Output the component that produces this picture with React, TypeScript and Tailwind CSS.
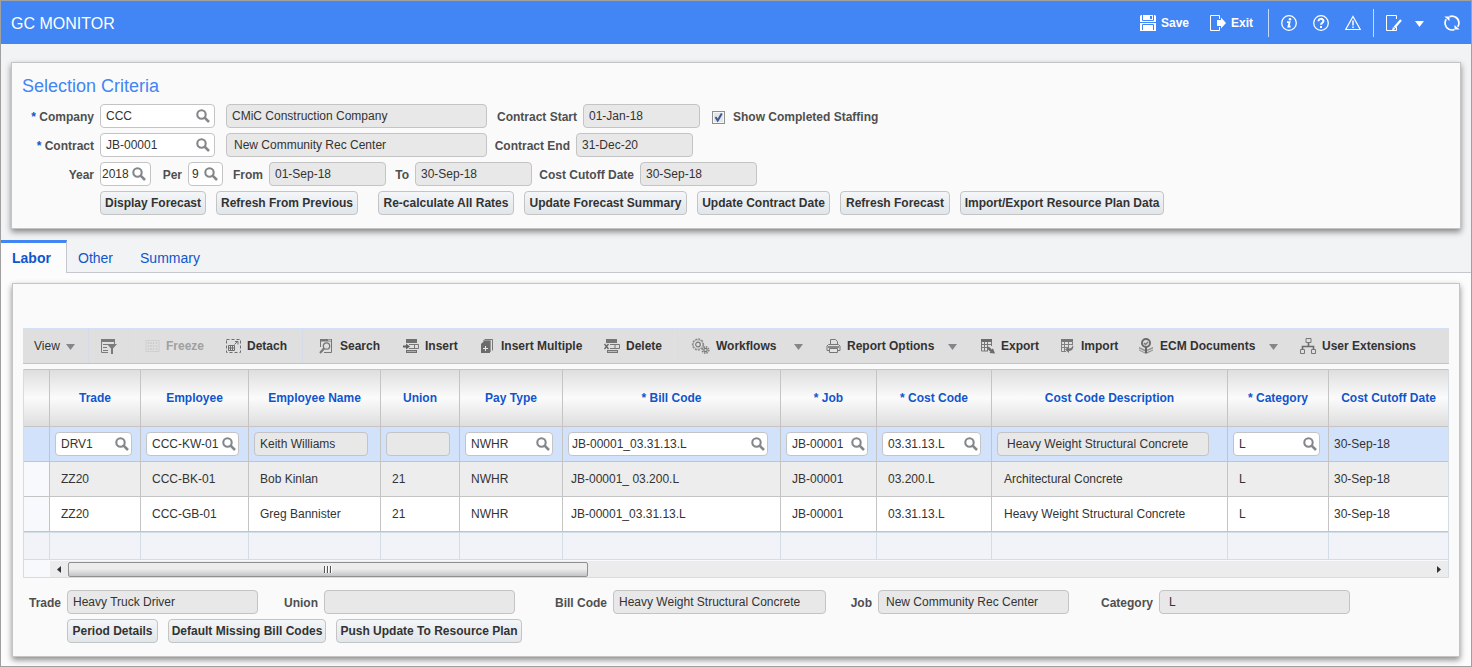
import React from 'react';
import { clsx } from 'clsx';

type IconProps = { className?: string };

/* ---------- Icons ---------- */

function Svg({ w = 16, h = 16, className, children }: { w?: number; h?: number; className?: string; children: React.ReactNode }) {
  return (
    <svg width={w} height={h} viewBox={`0 0 ${w} ${h}`} fill="none" className={clsx('shrink-0', className)} aria-hidden="true">
      {children}
    </svg>
  );
}

const SearchGlyph = () => (
  <Svg w={14} h={14}>
    <circle cx="5.5" cy="5.5" r="4.2" stroke="#84878a" strokeWidth="2.1" />
    <path d="M8.6 8.6l4.4 4.4" stroke="#84878a" strokeWidth="2.6" />
  </Svg>
);

const SaveIcon = () => (
  <Svg>
    <path d="M1 0h14l1 1v15H0V1z" fill="#fff" />
    <path d="M2.5 0v5.5h11V0M0 7.500h16M2.500 15V9.500h11V15" stroke="#4285f4" />
    <path d="M10 1h2v3h-2z" fill="#4285f4" />
  </Svg>
);

const ExitIcon = () => (
  <Svg>
    <path d="M9.500 4V.5h-9v15h9V12" stroke="#fff" />
    <path d="M7 5h4V2.500L16 8l-5 5.500V11H7z" fill="#fff" />
  </Svg>
);

const InfoIcon = () => (
  <Svg>
    <circle cx="8" cy="8" r="7.3" stroke="#fff" strokeWidth="1.3" />
    <circle cx="9" cy="4.2" r="1.3" fill="#fff" />
    <path d="M6 7.200h2.600L7.400 11.500h2.200" stroke="#fff" strokeWidth="1.800" />
  </Svg>
);

const HelpIcon = () => (
  <Svg>
    <circle cx="8" cy="8" r="7.3" stroke="#fff" strokeWidth="1.3" />
    <path d="M5.500 6.300c0-3.200 5-3.200 5-.2 0 1.800-2.500 1.700-2.500 3.600" stroke="#fff" strokeWidth="2" />
    <path d="M7 11h2v2H7z" fill="#fff" />
  </Svg>
);

const WarningIcon = () => (
  <Svg>
    <path d="M8 1.500L15.300 14.500H.7z" stroke="#fff" strokeWidth="1.200" />
    <path d="M8 5.500v5M8 11.500v1.500" stroke="#fff" strokeWidth="1.500" />
  </Svg>
);

const EditIcon = () => (
  <Svg>
    <path d="M10.500 4V.5H.5v15h10V12" stroke="#fff" />
    <path d="M15 5l-6.500 7.500" stroke="#fff" strokeWidth="2.200" />
    <path d="M6 15.500l1-3.500 2.500 2z" fill="#fff" />
  </Svg>
);

const RefreshIcon = () => (
  <Svg>
    <path d="M4.500 14A7 7 0 0 1 2.200 4.200M5.500 1.600A7 7 0 0 1 13.800 11.800M11.500 2A7 7 0 0 1 14.800 9M4.500 14a7 7 0 0 0 6 .500" stroke="#fff" strokeWidth="1.700" />
    <path d="M.300 1.500h5.200V6zM15.700 14.500h-5.200V10z" fill="#fff" />
  </Svg>
);

const CaretDown = ({ className }: IconProps) => (
  <Svg w={9} h={6} className={className}>
    <path d="M0 0h9L4.500 6z" fill="currentColor" />
  </Svg>
);

const FilterIcon = () => (
  <Svg w={17}>
    <path d="M1 1h14v3H1z" fill="#7b7b7b" />
    <path d="M1.500 3v11.500H8M3 6.500h5M3 9.500h4M3 12.500h5M14.500 4v2" stroke="#7b7b7b" />
    <path d="M7 6h10l-4 4.500V16h-2v-5.500z" fill="#7b7b7b" />
  </Svg>
);

const FreezeIcon = () => (
  <Svg>
    <path d="M2 2.500h13v11H2z" stroke="#cfcfcf" />
    <path d="M4.500 4v9M7 4v9M9.500 4v9M12.500 4v9" stroke="#cdcdcd" strokeWidth="1.500" strokeDasharray="2 1" />
  </Svg>
);

const DetachIcon = () => (
  <Svg>
    <path d="M1.500 1.500h14v13h-14z" stroke="#6f6f6f" strokeDasharray="3 2" />
    <path d="M3.500 7.500h6v5h-6zM3.500 10h6M5.500 7.500v5M7.500 7.500v5" stroke="#6f6f6f" />
    <path d="M9.500 6.500l3-3M10 3.500h3v3" stroke="#6f6f6f" />
  </Svg>
);

const SearchPageIcon = () => (
  <Svg>
    <path d="M2.500 9V1.500h11v13H6" stroke="#777" />
    <path d="M2 1h12v2.500H2z" fill="#777" />
    <path d="M10 2.200h3" stroke="#ddd" />
    <circle cx="8.500" cy="8" r="3.200" stroke="#777" strokeWidth="1.300" />
    <path d="M6 10.500L2 15" stroke="#777" strokeWidth="2" />
  </Svg>
);

const InsertIcon = () => (
  <Svg>
    <path d="M3 1h11v4H3zM3 12h11v3H3z" fill="#707070" />
    <path d="M4 13.500h9" stroke="#aaa" />
    <path d="M6 6.500h9.500v4H6M11.500 6v5" stroke="#777" />
    <path d="M0 7.500h3V5.500L7 8.500l-4 3v-2H0z" fill="#606060" />
  </Svg>
);

const InsertMultipleIcon = () => (
  <Svg>
    <path d="M5.500 1.500h8v11" stroke="#777" />
    <path d="M4 2.500h7.500v11.500" stroke="#999" />
    <path d="M5 3h6v12H2V6z" fill="#6b6b6b" />
    <path d="M6.500 8v5M4 10.500h5" stroke="#e8e8e8" />
  </Svg>
);

const DeleteIcon = () => (
  <Svg>
    <path d="M2 1h11v4H2zM3 12h11v3H3z" fill="#757575" />
    <path d="M4 13.500h9" stroke="#bbb" />
    <path d="M6 6.500h9.500v4H6M11 6v5" stroke="#777" />
    <path d="M.500 6l4 5M4.500 6l-4 5" stroke="#666" strokeWidth="1.300" />
  </Svg>
);

const GearsIcon = () => (
  <Svg w={20}>
    <circle cx="8" cy="6.500" r="5.500" stroke="#8c8c8c" strokeWidth="1.300" strokeDasharray="2 1.200" />
    <circle cx="8" cy="6.500" r="4.700" stroke="#969696" strokeWidth=".8" />
    <circle cx="8" cy="6.500" r="2.300" stroke="#777" strokeWidth="1.200" />
    <circle cx="15.500" cy="12" r="3.200" stroke="#808080" strokeWidth="1.600" strokeDasharray="1.500 1" />
    <circle cx="15.500" cy="12" r="1.700" stroke="#777" strokeWidth="1.200" />
  </Svg>
);

const PrintIcon = () => (
  <Svg>
    <path d="M5.500 6V1.500h5l2 2V6M3.500 6.500h10L15 8v4.500H2V8z" stroke="#777" />
    <path d="M3 8.500h11M3 9.500h11" stroke="#8a8a8a" />
    <path d="M4.500 10.500h8v4h-8z" fill="#e4e4e4" stroke="#777" />
  </Svg>
);

const ExportIcon = () => (
  <Svg>
    <path d="M2 1h11v3H2z" fill="#6b6b6b" />
    <path d="M2.500 3v10H9M12.500 3v5M5.500 4v9M8.500 4v9M2 6.500h11M2 9.500h8" stroke="#777" />
    <path d="M8 8l3 1.500 1.500 2 1.500-1 2 5-5.500-.500 1-1.500C9.500 12.500 8.500 11 8 8z" fill="#6b6b6b" />
  </Svg>
);

const ImportIcon = () => (
  <Svg>
    <path d="M2 1h12v3H2z" fill="#777" />
    <path d="M2.500 3v10.500H7M13.500 3v4M5.500 4v10M9.500 4v5M2 6.500h12M2 9.500h7" stroke="#808080" />
    <path d="M14 7c1 4-1 5.500-4 6v2l-4-3.500L10 8.500v2c2 0 3-1 4-3.500z" fill="#757575" />
  </Svg>
);

const EcmIcon = () => (
  <Svg>
    <path d="M1 9l7 3 7-3v3.500L8 16l-7-3.500z" fill="#909090" />
    <path d="M1 11l6.500 3.200L15 11" stroke="#ddd" />
    <circle cx="8" cy="5" r="4" fill="#ddd" stroke="#6c6c6c" strokeWidth="2" />
    <path d="M6 5l1.500 1.500L10 4" stroke="#777" strokeWidth="1.300" />
    <path d="M8 9v6" stroke="#666" strokeWidth="2" />
  </Svg>
);

const OrgIcon = () => (
  <Svg>
    <path d="M6 .5h5v4H6zM.5 11.500h4v4h-4zM11.500 11.500h4v4h-4z" stroke="#777" />
    <path d="M8.500 5v3.500M2.500 11V8.500h11V11" stroke="#6b6b6b" strokeWidth="1.600" />
  </Svg>
);

/* ---------- Controls ---------- */

const readOnlyBox = 'h-6 shrink-0 rounded-[4px] border border-[#c4c4c4] bg-[#e8e8e8] pb-px text-xs text-[#333]';

function ReadOnlyField({ id, label, value, className, pad = 'pl-[5px]' }: { id?: string; label?: string; value: string; className: string; pad?: string }) {
  return <input id={id} aria-label={label} readOnly value={value} className={clsx(readOnlyBox, pad, className)} />;
}

function LovField({ id, label, value, className, pad = 'pl-[5px] pr-1' }: { id?: string; label: string; value: string; className: string; pad?: string }) {
  return (
    <div className={clsx('flex h-6 shrink-0 items-center rounded-[4px] border border-[#c4c4c4] bg-white', pad, className)}>
      <input id={id} aria-label={id ? undefined : label} defaultValue={value} className="h-full w-0 min-w-0 flex-1 bg-transparent pb-px text-xs text-[#333] outline-none" />
      <button type="button" aria-label={`Search ${label}`}>
        <SearchGlyph />
      </button>
    </div>
  );
}

function Label({ htmlFor, required, className, children }: { htmlFor: string; required?: boolean; className: string; children: React.ReactNode }) {
  return (
    <label htmlFor={htmlFor} className={clsx('shrink-0 pt-[2px] pr-[6px] text-right text-xs font-bold whitespace-nowrap text-[#4f4f4f]', className)}>
      {required && <span className="text-[#1155cc]">* </span>}
      {children}
    </label>
  );
}

function Button({ className, children }: { className?: string; children: React.ReactNode }) {
  return (
    <button
      type="button"
      className={clsx(
        'h-6 shrink-0 rounded-[4px] border border-[#c4c4c4] bg-linear-to-b from-[#f4f6f8] to-[#e1e6ea] text-center text-xs font-bold whitespace-nowrap text-[#333]',
        className
      )}
    >
      {children}
    </button>
  );
}

/* ---------- Header ---------- */

function Header() {
  return (
    <header className="flex h-[43px] items-center justify-between bg-[#4285f4] pr-[11px] pl-[10px] text-white">
      <h1 className="pt-[3px] text-base">GC MONITOR</h1>
      <div className="flex items-center text-xs font-bold">
        <button type="button" className="mr-[21px] flex items-center gap-[5px]"><SaveIcon />Save</button>
        <button type="button" className="mr-[15px] flex items-center gap-[5px]"><ExitIcon />Exit</button>
        <span className="mr-3 h-7 w-px bg-[#c6dafc]" />
        <div className="flex gap-4">
          <button type="button" aria-label="Information"><InfoIcon /></button>
          <button type="button" aria-label="Help"><HelpIcon /></button>
          <button type="button" aria-label="Warnings"><WarningIcon /></button>
        </div>
        <span className="mx-3 h-7 w-px bg-[#c6dafc]" />
        <button type="button" className="mr-5 flex items-center gap-[13px]" aria-label="Edit"><EditIcon /><CaretDown className="mt-[2px]" /></button>
        <button type="button" aria-label="Refresh"><RefreshIcon /></button>
      </div>
    </header>
  );
}

/* ---------- Selection criteria ---------- */

const panel = 'border border-[#c4c4c4] bg-[#fafafa] shadow-[0_3px_6px_rgba(0,0,0,0.45)]';

function SelectionCriteria() {
  return (
    <section className={clsx('mx-[10px] mt-[18px] pb-[13px]', panel)}>
      <h2 className="pt-[11px] pb-[6px] pl-[10px] text-lg leading-6 text-[#4285f4]">Selection Criteria</h2>
      <div className="flex flex-col gap-[5px]">
        <div className="flex items-center">
          <Label htmlFor="company" required className="w-[88px]">Company</Label>
          <LovField id="company" label="Company" value="CCC" className="w-[115px]" />
          <ReadOnlyField label="Company name" value="CMiC Construction Company" className="ml-[11px] w-[261px]" />
          <Label htmlFor="start" className="w-24">Contract Start</Label>
          <ReadOnlyField id="start" value="01-Jan-18" className="w-[117px]" />
          <span className="mt-[2px] ml-3 grid size-[13px]">
            <input
              id="staffing"
              type="checkbox"
              defaultChecked
              className="peer col-start-1 row-start-1 size-[13px] appearance-none border border-[#8e8f8f] bg-[#e3e6ea] shadow-[inset_0_0_0_1px_#f6f6f6]"
            />
            <svg viewBox="0 0 13 13" className="pointer-events-none col-start-1 row-start-1 hidden size-[13px] peer-checked:block" fill="none" aria-hidden="true">
              <path d="M3.500 6l2.200 3.500L9.800 2.500" stroke="#42578f" strokeWidth="2" />
            </svg>
          </span>
          <label htmlFor="staffing" className="ml-2 pt-[2px] text-xs font-bold text-[#4f4f4f]">Show Completed Staffing</label>
        </div>
        <div className="flex items-center">
          <Label htmlFor="contract" required className="w-[88px]">Contract</Label>
          <LovField id="contract" label="Contract" value="JB-00001" className="w-[115px]" />
          <ReadOnlyField label="Contract name" value="New Community Rec Center" pad="pl-[7px]" className="ml-[11px] w-[261px]" />
          <Label htmlFor="end" className="w-[89px]">Contract End</Label>
          <ReadOnlyField id="end" value="31-Dec-20" className="w-[117px]" />
        </div>
        <div className="flex items-center">
          <Label htmlFor="year" className="w-[88px]">Year</Label>
          <LovField id="year" label="Year" value="2018" pad="pl-px pr-1" className="w-[51px]" />
          <Label htmlFor="per" className="w-[37px]">Per</Label>
          <LovField id="per" label="Period" value="9" pad="pl-[3px] pr-1" className="w-[35px]" />
          <Label htmlFor="from" className="w-[46px]">From</Label>
          <ReadOnlyField id="from" value="01-Sep-18" className="w-[117px]" />
          <Label htmlFor="to" className="w-[29px]">To</Label>
          <ReadOnlyField id="to" value="30-Sep-18" className="w-[117px]" />
          <Label htmlFor="cutoff" className="w-[108px]">Cost Cutoff Date</Label>
          <ReadOnlyField id="cutoff" value="30-Sep-18" className="w-[117px]" />
        </div>
        <div className="flex gap-[10px] pl-[88px]">
          <Button className="w-[106px]">Display Forecast</Button>
          <Button className="mr-[10px] w-[142px]">Refresh From Previous</Button>
          <Button className="w-[136px]">Re-calculate All Rates</Button>
          <Button className="w-[163px]">Update Forecast Summary</Button>
          <Button className="w-[133px]">Update Contract Date</Button>
          <Button className="w-[110px]">Refresh Forecast</Button>
          <Button className="w-[204px]">Import/Export Resource Plan Data</Button>
        </div>
      </div>
    </section>
  );
}

/* ---------- Tabs ---------- */

function Tabs() {
  return (
    <nav className="mt-[11px] flex h-[33px] text-sm text-[#1155cc]" role="tablist">
      <button type="button" role="tab" aria-selected="true" className="w-[66px] border-t-[3px] border-r border-t-[#4285f4] border-r-[#c4c8cc] bg-[#fcfcfc] pl-[11px] text-left font-bold">
        Labor
      </button>
      <div className="flex flex-1 gap-[27px] border-b border-[#c4c8cc] pt-[3px] pl-[11px]">
        <button type="button" role="tab" aria-selected="false">Other</button>
        <button type="button" role="tab" aria-selected="false">Summary</button>
      </div>
    </nav>
  );
}

/* ---------- Table toolbar ---------- */

function Tool({ icon, className, disabled, children }: { icon: React.ReactNode; className?: string; disabled?: boolean; children: React.ReactNode }) {
  return (
    <button type="button" disabled={disabled} className={clsx('flex shrink-0 items-center gap-[6px] font-bold whitespace-nowrap', disabled && 'text-[#a0a0a0]', className)}>
      {icon}
      {children}
    </button>
  );
}

function MenuArrow({ label }: { label: string }) {
  return (
    <button type="button" aria-label={label} className="w-[31px] shrink-0 pt-px text-[#84878a]">
      <CaretDown />
    </button>
  );
}

function Toolbar() {
  return (
    <div className="flex h-9 items-stretch overflow-hidden border-t border-b border-t-[#d3e0f5] border-b-[#c4c4c4] bg-[#dfdfdf] text-xs text-[#333]" role="toolbar">
      <button type="button" className="flex w-[66px] shrink-0 items-center gap-[6px] border-r border-[#d3dce8] pl-[11px]">
        View <CaretDown className="mt-[2px] text-[#84878a]" />
      </button>
      <button type="button" aria-label="Query by example" className="flex w-[41px] shrink-0 items-center border-r border-[#d9dee5] pl-[11px]"><FilterIcon /></button>
      <Tool icon={<FreezeIcon />} disabled className="ml-[14px] w-[81px]">Freeze</Tool>
      <Tool icon={<DetachIcon />} className="w-[78px] border-r border-[#d3dce8]">Detach</Tool>
      <Tool icon={<SearchPageIcon />} className="ml-[15px] w-[85px]">Search</Tool>
      <Tool icon={<InsertIcon />} className="w-[76px]">Insert</Tool>
      <Tool icon={<InsertMultipleIcon />} className="w-[125px]">Insert Multiple</Tool>
      <Tool icon={<DeleteIcon />} className="w-[74px] border-r border-[#d9dee5]">Delete</Tool>
      <Tool icon={<GearsIcon />} className="ml-3 w-[104px]">Workflows</Tool>
      <MenuArrow label="Workflows menu" />
      <Tool icon={<PrintIcon />} className="w-[123px]">Report Options</Tool>
      <MenuArrow label="Report options menu" />
      <Tool icon={<ExportIcon />} className="w-20">Export</Tool>
      <Tool icon={<ImportIcon />} className="w-[79px]">Import</Tool>
      <Tool icon={<EcmIcon />} className="w-[131px]">ECM Documents</Tool>
      <MenuArrow label="ECM documents menu" />
      <Tool icon={<OrgIcon />}>User Extensions</Tool>
    </div>
  );
}

/* ---------- Labor table ---------- */

const columns = [
  { name: 'Trade', col: 'w-[91px]', box: 'w-[77px]', kind: 'lov' },
  { name: 'Employee', col: 'w-[108px]', box: 'w-[93px]', kind: 'lov' },
  { name: 'Employee Name', col: 'w-[132px]', box: 'w-[114px]', kind: 'readonly' },
  { name: 'Union', col: 'w-[79px]', box: 'w-16', kind: 'readonly' },
  { name: 'Pay Type', col: 'w-[103px]', box: 'w-[88px]', kind: 'lov' },
  { name: '* Bill Code', col: 'w-[218px]', box: 'w-[200px]', kind: 'lov', pad: 'pl-[3px] pr-[2px]' },
  { name: '* Job', col: 'w-24', box: 'w-[82px]', kind: 'lov' },
  { name: '* Cost Code', col: 'w-[115px]', box: 'w-[99px]', kind: 'lov' },
  { name: 'Cost Code Description', col: 'w-[236px]', box: 'w-[212px]', kind: 'readonly', pad: 'pl-[9px]' },
  { name: '* Category', col: 'w-[101px]', box: 'w-[87px]', kind: 'lov' },
  { name: 'Cost Cutoff Date', col: 'w-auto', box: '', kind: 'text' },
];

const rows = [
  ['DRV1', 'CCC-KW-01', 'Keith Williams', '', 'NWHR', 'JB-00001_03.31.13.L', 'JB-00001', '03.31.13.L', 'Heavy Weight Structural Concrete', 'L', '30-Sep-18'],
  ['ZZ20', 'CCC-BK-01', 'Bob Kinlan', '21', 'NWHR', 'JB-00001_ 03.200.L', 'JB-00001', '03.200.L', 'Architectural Concrete', 'L', '30-Sep-18'],
  ['ZZ20', 'CCC-GB-01', 'Greg Bannister', '21', 'NWHR', 'JB-00001_03.31.13.L', 'JB-00001', '03.31.13.L', 'Heavy Weight Structural Concrete', 'L', '30-Sep-18'],
];

function EditCell({ column, value }: { column: (typeof columns)[number]; value: string }) {
  if (column.kind === 'lov') return <LovField label={column.name} value={value} pad={column.pad ?? 'pl-[5px] pr-[2px]'} className={column.box} />;
  if (column.kind === 'readonly') return <ReadOnlyField label={column.name} value={value} pad={column.pad} className={clsx('block', column.box)} />;
  return <>{value}</>;
}

function LaborTable() {
  return (
    <div className="mt-[5px]">
      <table className="w-full table-fixed border-separate border-spacing-0 border-x border-[#d3dde5] text-xs text-[#333]">
        <colgroup>
          <col className="w-[26px]" />
          {columns.map((c) => <col key={c.name} className={c.col} />)}
        </colgroup>
        <thead>
          <tr className="h-[58px] text-[#1155cc]">
            <th className="border-y border-r border-[#c4c4c4] bg-linear-to-b from-[#dedede] via-[#fbfbfb] to-[#dedede]" aria-label="Row" />
            {columns.map((c) => (
              <th key={c.name} scope="col" className="border-y border-r border-[#c4c4c4] bg-linear-to-b from-[#dedede] via-[#fbfbfb] to-[#dedede] whitespace-nowrap last:border-r-0">
                {c.name}
              </th>
            ))}
          </tr>
        </thead>
        <tbody>
          {rows.map((row, r) => (
            <tr key={row[1]} className={clsx('h-[35px]', r === 0 ? 'bg-[#d2e2fb]' : r === 1 ? 'bg-[#ededed]' : 'bg-white')}>
              <td className={clsx('border-r border-b border-[#c4c4c4]', r > 0 && 'bg-[#f8f9fd]')} />
              {row.map((value, i) => (
                <td
                  key={columns[i].name}
                  className={clsx('border-r border-b border-[#c4c4c4] whitespace-nowrap last:border-r-0', r === 0 || columns[i].kind === 'text' ? 'pl-[5px]' : i === 8 ? 'pl-3' : i === 5 ? 'pl-2' : 'pl-[11px]')}
                >
                  {r === 0 ? <EditCell column={columns[i]} value={value} /> : value}
                </td>
              ))}
            </tr>
          ))}
          <tr className="h-7 bg-[#f1f3f8]">
            <td className="border-y border-r border-[#d3dde5]" />
            {columns.map((c) => <td key={c.name} className="border-y border-r border-[#d3dde5] last:border-r-0" />)}
          </tr>
        </tbody>
      </table>

      {/* Horizontal scrollbar */}
      <div className="flex h-[18px] border-x border-b border-[#d3dde5] bg-[#f8f9fd] pt-px pl-[26px]">
        <div className="flex flex-1 items-center bg-[#ececec]">
          <button type="button" aria-label="Scroll left" className="flex w-[18px] justify-center">
            <Svg w={4} h={7}><path d="M4 0v7L0 3.500z" fill="#333" /></Svg>
          </button>
          <div className="flex h-[15px] w-[37.2%] items-center justify-center gap-px rounded-[2px] border border-[#909090] bg-linear-to-b from-[#ededed] from-45% to-[#c2c4c6]">
            <span className="h-[7px] w-[2px] border-r border-white bg-[#555]" />
            <span className="h-[7px] w-[2px] border-r border-white bg-[#555]" />
            <span className="h-[7px] w-[2px] border-r border-white bg-[#555]" />
          </div>
          <button type="button" aria-label="Scroll right" className="ml-auto flex w-[18px] justify-center">
            <Svg w={4} h={7}><path d="M0 0v7l4-3.500z" fill="#333" /></Svg>
          </button>
        </div>
      </div>
    </div>
  );
}

function DetailFields() {
  return (
    <div className="mt-3 flex flex-col gap-[5px]">
      <div className="flex items-center">
        <Label htmlFor="d-trade" className="w-11">Trade</Label>
        <ReadOnlyField id="d-trade" value="Heavy Truck Driver" className="w-[191px]" />
        <Label htmlFor="d-union" className="w-[66px]">Union</Label>
        <ReadOnlyField id="d-union" value="" className="w-[191px]" />
        <Label htmlFor="d-bill" className="w-[98px]">Bill Code</Label>
        <ReadOnlyField id="d-bill" value="Heavy Weight Structural Concrete" className="w-[213px]" />
        <Label htmlFor="d-job" className="w-[52px]">Job</Label>
        <ReadOnlyField id="d-job" value="New Community Rec Center" pad="pl-[7px]" className="w-[191px]" />
        <Label htmlFor="d-category" className="w-[90px]">Category</Label>
        <ReadOnlyField id="d-category" value="L" pad="pl-[9px]" className="w-[191px]" />
      </div>
      <div className="flex gap-[10px] pl-11">
        <Button className="w-[91px]">Period Details</Button>
        <Button className="w-[158px]">Default Missing Bill Codes</Button>
        <Button className="w-[186px]">Push Update To Resource Plan</Button>
      </div>
    </div>
  );
}

export default function App() {
  return (
    <div className="flex min-h-screen flex-col overflow-hidden border border-[#a0a0a0] bg-[#f1f3f5] font-['Liberation_Sans',Arial,sans-serif]">
      <Header />
      <SelectionCriteria />
      <Tabs />
      <main className="flex-1 bg-[#fcfcfc] px-[11px] pt-[10px] pb-[9px]">
        <section className={clsx('px-[10px] pt-11 pb-[13px]', panel)}>
          <Toolbar />
          <LaborTable />
          <DetailFields />
        </section>
      </main>
    </div>
  );
}
